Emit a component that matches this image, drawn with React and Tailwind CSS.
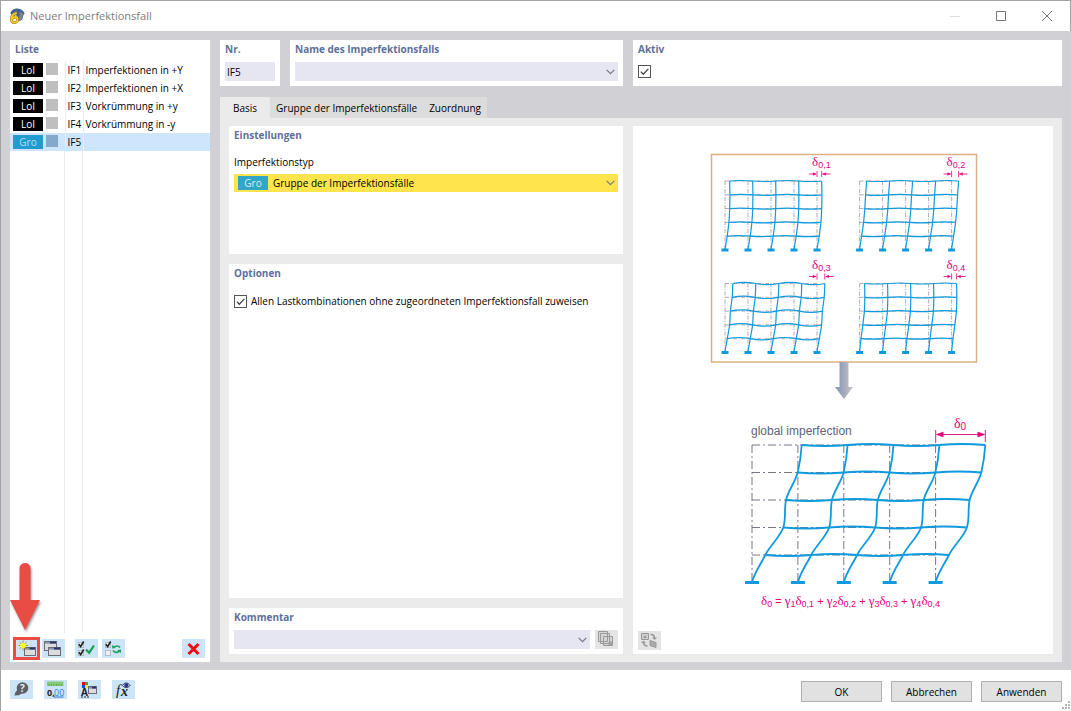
import React, { useState } from "react";

const CASES = [
  { id: "IF1", tag: "LoI", name: "Imperfektionen in +Y" },
  { id: "IF2", tag: "LoI", name: "Imperfektionen in +X" },
  { id: "IF3", tag: "LoI", name: "Vorkrümmung in +y" },
  { id: "IF4", tag: "LoI", name: "Vorkrümmung in -y" },
  { id: "IF5", tag: "Gro", name: "" },
];

const TABS = ["Basis", "Gruppe der Imperfektionsfälle", "Zuordnung"];

const Card = ({ className = "", children }) => (
  <section className={`bg-white px-[5px] pt-px ${className}`}>{children}</section>
);

const Title = ({ children }) => (
  <h2 className="text-[10px] leading-4 font-bold text-[#5f709b]">{children}</h2>
);

const Chevron = () => (
  <svg
    className="pointer-events-none absolute top-1/2 right-[3px] h-[6px] w-[9px] -translate-y-1/2"
    viewBox="0 0 9 6"
    fill="none"
    stroke="#7b7b86"
    strokeWidth="1.3"
  >
    <path d="M.7.9 4.5 4.7 8.3.9" />
  </svg>
);

const Checkbox = ({ id, label }) => {
  const [checked, setChecked] = useState(true);
  return (
    <span className="relative block h-[13px] w-[13px] shrink-0">
      <input
        id={id}
        type="checkbox"
        aria-label={label}
        checked={checked}
        onChange={(e) => setChecked(e.target.checked)}
        className="peer block h-[13px] w-[13px] appearance-none border border-[#555] bg-white"
      />
      <svg
        className="pointer-events-none absolute inset-0 hidden peer-checked:block"
        viewBox="0 0 13 13"
        fill="none"
        stroke="#444"
        strokeWidth="1.3"
      >
        <path d="M2.8 6.6 5.3 9.2 10.4 3.9" />
      </svg>
    </span>
  );
};

const IconButton = ({ label, disabled, children }) => (
  <button
    type="button"
    aria-label={label}
    disabled={disabled}
    className={`flex h-[19px] w-[23px] items-center justify-center ${
      disabled ? "bg-[#e4e4e4]" : "bg-[#cce4f7] hover:bg-[#b5d8f3]"
    }`}
  >
    <svg viewBox="0 0 23 19" className="h-[19px] w-[23px]">
      {children}
    </svg>
  </button>
);

const AppLogo = () => (
  <svg viewBox="0 0 16 16" className="h-4 w-4">
    <path d="M1.500 5.500C1.500 2.500 5 .3 8.500.5c3.500.2 6 2 7.200 5.200l-1.200 1-1.300 5L9 13.500 7 6 3 7z" fill="#47628f" />
    <path d="M11 3.500l3.200 2.300-1.600 5.700-2.600 1z" fill="#7d8694" />
    <path
      d="M7.800 4.800C4.500 5.500 2.300 8 2.300 11.200c0 2.100 1.200 3.400 3 3.400s3.300-1.300 3.300-3.100c0-1.500-.9-2.500-2.400-2.500-1.400 0-2.800.9-3.500 2.400"
      fill="none"
      stroke="#8a742a"
      strokeWidth="2.800"
    />
    <path
      d="M7.800 4.800C4.500 5.500 2.300 8 2.300 11.200c0 2.100 1.200 3.400 3 3.400s3.300-1.300 3.300-3.100c0-1.500-.9-2.500-2.400-2.500-1.400 0-2.800.9-3.500 2.400"
      fill="none"
      stroke="#f6cb25"
      strokeWidth="1.800"
    />
  </svg>
);

// Little window with a dark title bar, used in several toolbar icons
const MiniWindow = ({ x, y, w = 10, h = 8 }) => (
  <g>
    <rect x={x + 0.5} y={y + 0.5} width={w} height={h} fill="#dcdcde" stroke="#6c6c72" />
    <rect x={x + 1} y={y + 1} width={w - 1} height="1.700" fill="#8d93a6" />
    <rect x={x + w / 2} y={y + 0.5} width={w / 2} height="2" fill="#27336f" />
  </g>
);

const MiniCheck = ({ x, y, on = true }) => (
  <g fill="none">
    <rect x={x + 0.5} y={y + 0.5} width="5" height="5" fill="#e9f0f6" stroke="#b5bcc4" />
    {on && <path d={`M${x + 0.800} ${y + 2.2}l1.900 2.300 3-5`} stroke="#222" strokeWidth="1.600" />}
  </g>
);

const NewIcon = () => (
  <>
    <MiniWindow x={9} y={8} w={11} h={8} />
    <path d="M8 1.500v10M3.500 6.500h9.500M4.500 3.200l7 6.600M11.500 3.200l-7 6.600" stroke="#a39c22" strokeWidth="1" />
    <circle cx="8" cy="6.500" r="2.800" fill="#fbf42c" />
  </>
);

const CopyIcon = () => (
  <>
    <MiniWindow x={2} y={2} w={12} h={9} />
    <MiniWindow x={6} y={8} w={12} h={8} />
  </>
);

const CheckAllIcon = () => (
  <>
    <MiniCheck x={3} y={3} />
    <MiniCheck x={3} y={11} />
    <path d="M11 10.500l3.200 3.200 4.800-7.200" fill="none" stroke="#17a04a" strokeWidth="2.200" />
  </>
);

const InvertIcon = () => (
  <>
    <MiniCheck x={3} y={3} />
    <MiniCheck x={3} y={11} on={false} />
    <path d="M18 8.500c-1.500-2-4.500-2-6 0M11 11.500c2 2.500 5 2.500 6.500.5" fill="none" stroke="#22a05a" strokeWidth="1.700" />
    <path d="M10.200 9.500V5.800l3.600 3.200zM19 14V10.500l-4 .8z" fill="#22a05a" />
  </>
);

const HelpIcon = () => (
  <>
    <circle cx="12.500" cy="8" r="5.800" fill="#5f5f63" />
    <path d="M8 9l-2.500 3.300-1.200 3.200 4.500-.3 3-1.700z" fill="#5f5f63" />
    <text x="12.500" y="11.500" textAnchor="middle" fontSize="10" fontWeight="700" fill="#dfeefa">?</text>
  </>
);

const DecimalsIcon = () => (
  <>
    <rect x="3" y="1.500" width="16.500" height="4.500" fill="#86ca79" />
    <path d="M5 6V4M7.500 6V4M10 6V4M12.500 6V4M15 6V4M17.500 6V4" stroke="#4e9c46" strokeWidth=".7" />
    <text x="3" y="15.500" fontSize="9" fontWeight="700" fill="#222">0,</text>
    <text x="10" y="15.500" fontSize="9" fill="#3978d4">00</text>
    <path d="M10 17h9.500" stroke="#3978d4" />
  </>
);

const DisplayIcon = () => (
  <>
    <path d="M4 2h3v3H4z" fill="#f00" />
    <path d="M7 2h3v3H7z" fill="#2eae37" />
    <path d="M4 5h3v3H4z" fill="#2545e0" />
    <path d="M7 5h3v3H7z" fill="#f2e42a" />
    <text x="3" y="15.500" fontSize="10" fontWeight="700" fill="#222">A</text>
    <path d="M3 17h9" stroke="#222" strokeDasharray="2 1" />
    <MiniWindow x={10} y={6} w={8} h={7} />
  </>
);

const FormulaIcon = () => (
  <>
    <text x="4" y="14.500" fontSize="15" fontStyle="italic" fontFamily="Liberation Serif, serif" fill="#222">f</text>
    <text x="9" y="16" fontSize="14" fontStyle="italic" fontWeight="700" fontFamily="Liberation Serif, serif" fill="#222">x</text>
    <path d="M10.500 5.500c2-3.300 5.500-3.300 7.500 0-2 2.800-5.500 2.800-7.500 0z" fill="#e6e8f5" stroke="#232b5c" />
    <circle cx="14.300" cy="5.200" r="2" fill="#27348b" />
  </>
);

// A sheared multi-storey frame; shifts are listed from the roof down to the base
const Frame = ({ x, y, bay, storey, shifts, wave, weight, foot, dash, ghostWeight }) => {
  const bays = [0, 1, 2, 3, 4];
  const base = y + storey * 5;

  const column = (i) => {
    const pts = shifts.map((s, k) => [x + i * bay + s, y + k * storey]);
    let d = `M${pts[0].join(" ")}`;
    for (let k = 0; k < pts.length - 1; k++) {
      const before = pts[k - 1] || [pts[k][0], y];
      const a = pts[k];
      const b = pts[k + 1];
      const after = pts[k + 2] || b;
      d += `C${a[0] + (b[0] - before[0]) / 7} ${a[1] + storey / 3} ${b[0] - (after[0] - a[0]) / 7} ${b[1] - storey / 3} ${b[0]} ${b[1]}`;
    }
    return d;
  };

  const beam = (k) => {
    const left = x + shifts[k];
    const top = y + k * storey;
    return `M${left} ${top}q${bay / 2} ${wave} ${bay} 0t${bay} 0t${bay} 0t${bay} 0`;
  };

  return (
    <g fill="none">
      <g stroke="#77778a" strokeWidth={ghostWeight} strokeDasharray={dash}>
        {bays.map((i) => (
          <path key={`v${i}`} d={`M${x + i * bay} ${y}V${base}`} />
        ))}
        {bays.map((k) => (
          <path key={`h${k}`} d={`M${x} ${y + k * storey}h${bay * 4}`} />
        ))}
      </g>
      <g stroke="#0f9ade" strokeWidth={weight} strokeLinejoin="round">
        {bays.map((i) => (
          <path key={`c${i}`} d={column(i)} />
        ))}
        {bays.map((k) => (
          <path key={`b${k}`} d={beam(k)} />
        ))}
      </g>
      <g fill="#0f9ade">
        {bays.map((i) => (
          <rect key={i} x={x + i * bay - foot / 2} y={base - 1.5} width={foot} height="3" />
        ))}
      </g>
    </g>
  );
};

const Delta = ({ sub, size = 13 }) => (
  <>
    <tspan fontFamily="Liberation Serif, serif" fontSize={size}>δ</tspan>
    <tspan dy="2" fontSize={size - 4}>{sub}</tspan>
  </>
);

const SmallFrame = ({ x, y, sub, shifts, wave }) => {
  const edge = x + 92;
  const tip = edge + shifts[0];
  return (
    <g>
      <Frame
        x={x}
        y={y}
        bay={23}
        storey={13.8}
        shifts={shifts}
        wave={wave}
        weight={1.2}
        foot={7}
        dash="4 1.5 1 1.5"
        ghostWeight={0.6}
      />
      <text x={edge - 5} y={y - 15} fill="#e5007d"><Delta sub={sub} /></text>
      <g stroke="#e5007d" strokeWidth=".8" fill="#e5007d">
        <path d={`M${edge} ${y - 10}v6M${tip} ${y - 10}v6M${edge - 8} ${y - 7}h7M${tip + 1} ${y - 7}h8`} />
        <path d={`M${edge - 1} ${y - 7}l-3-1.300v2.600zM${tip + 1} ${y - 7}l3-1.300v2.600z`} strokeWidth=".4" />
      </g>
    </g>
  );
};

const ImperfectionDiagram = () => (
  <svg
    viewBox="0 0 298 470"
    className="h-[470px] w-[298px]"
    fontFamily="Liberation Sans, Arial, sans-serif"
    role="img"
    aria-label="global imperfection"
  >
    <defs>
      <linearGradient id="arrowFill">
        <stop offset="0" stopColor="#7f92b8" />
        <stop offset="1" stopColor="#c9c4c2" />
      </linearGradient>
    </defs>

    <rect x="17.500" y="9.500" width="265" height="207.500" fill="none" stroke="#dcb182" strokeWidth="1.500" />
    <SmallFrame x={31} y={36} sub="0,1" shifts={[4.7, 4.9, 4.7, 3.9, 2.2, 0]} wave={-1} />
    <SmallFrame x={165.6} y={36} sub="0,2" shifts={[7, 6, 5.2, 4, 2, 0]} wave={1} />
    <SmallFrame x={31} y={138.5} sub="0,3" shifts={[7.8, 7.2, 5.4, 4.6, 2.3, 0]} wave={-2.4} />
    <SmallFrame x={165.6} y={138.5} sub="0,4" shifts={[5, 5.2, 4.8, 3.2, 1.4, 0]} wave={1} />

    <path d="M145.500 217h9v25h4.500l-9 12-9-12h4.500z" fill="url(#arrowFill)" />

    <text x="57" y="290" fontSize="12" fill="#62627a">global imperfection</text>
    <text x="260" y="283" fill="#e5007d"><Delta sub="0" size={14} /></text>
    <g stroke="#e5007d" fill="#e5007d">
      <path d="M241.700 285v13M291.300 285v12M246 289.500h41" strokeWidth=".9" />
      <path d="M242.200 289.500l7-2.500v5zM290.800 289.500l-7-2.500v5z" strokeWidth=".5" />
    </g>
    <Frame
      x={58}
      y={300}
      bay={45.9}
      storey={27.5}
      shifts={[49.7, 45.7, 34, 31.3, 13.3, 0]}
      wave={2}
      weight={1.8}
      foot={14}
      dash="8 3 2 3"
      ghostWeight={1}
    />

    <text x="67" y="460" fontSize="11" fill="#e5007d">
      <Delta sub="0" />
      <tspan dy="-2"> = </tspan>
      {[1, 2, 3, 4].map((n) => (
        <React.Fragment key={n}>
          {n > 1 && <tspan dy="-2"> + </tspan>}
          <tspan fontFamily="Liberation Serif, serif" fontSize="13">γ</tspan>
          <tspan dy="2" fontSize="9">{n}</tspan>
          <tspan dy="-2" fontFamily="Liberation Serif, serif" fontSize="13">δ</tspan>
          <tspan dy="2" fontSize="9">{`0,${n}`}</tspan>
        </React.Fragment>
      ))}
    </text>
  </svg>
);

const CaseList = () => (
  <aside className="flex w-[200px] shrink-0 flex-col bg-white pt-px pb-1">
    <div className="px-[5px] pb-1">
      <Title>Liste</Title>
    </div>
    <table className="w-full table-fixed border-collapse">
      <colgroup>
        <col className="w-[55px]" />
        <col className="w-[18px]" />
        <col />
      </colgroup>
      <tbody>
        {CASES.map((c) => (
          <tr key={c.id} className={c.tag === "Gro" ? "bg-[#cde6fd]" : ""}>
            <td className="h-[18px] border-r border-[#ededed] p-0">
              <div className="flex gap-[3px] pl-[3px]">
                <span
                  className={`h-[14px] w-[30px] text-center leading-[15px] ${
                    c.tag === "Gro" ? "bg-[#229bd0] text-[#b5dcf2]" : "bg-black text-white"
                  }`}
                >
                  {c.tag}
                </span>
                <span className={`h-3 w-3 ${c.tag === "Gro" ? "bg-[#86a9c9]" : "bg-[#bfbfbf]"}`} />
              </div>
            </td>
            <td className="border-r border-[#ededed] p-0 pl-[2px]">{c.id}</td>
            <td className="p-0 pl-[2px] whitespace-nowrap">{c.name}</td>
          </tr>
        ))}
      </tbody>
    </table>
    <div className="flex flex-1">
      <div className="w-[55px] border-r border-[#ededed]" />
      <div className="w-[18px] border-r border-[#ededed]" />
    </div>
    <div className="flex items-center pt-[6px] pr-[5px] pl-[5px]">
      <div className="relative outline-3 -outline-offset-1 outline-[#e94b45]">
        <IconButton label="Neu"><NewIcon /></IconButton>
        {/* Callout arrow pointing at the "new" button */}
        <svg
          viewBox="0 0 36 76"
          className="pointer-events-none absolute bottom-full left-1/2 h-[76px] w-9 -translate-x-1/2 drop-shadow-[1px_2px_1px_rgba(0,0,0,0.4)]"
        >
          <path d="M10.500 5a5.500 5 0 0 1 11 0V37H31L16 67 1 37H10.500z" fill="#e94b45" />
        </svg>
      </div>
      <div className="ml-1"><IconButton label="Kopieren"><CopyIcon /></IconButton></div>
      <div className="ml-[10px]"><IconButton label="Alle auswählen"><CheckAllIcon /></IconButton></div>
      <div className="ml-1"><IconButton label="Auswahl umkehren"><InvertIcon /></IconButton></div>
      <div className="ml-auto">
        <IconButton label="Löschen">
          <path d="M6.500 5l10 10M16.500 5l-10 10" stroke="#f20d0d" strokeWidth="3" />
        </IconButton>
      </div>
    </div>
  </aside>
);

const selectClass = "block h-[19px] w-full appearance-none bg-[#e6e6f2]";

const App = () => {
  const [tab, setTab] = useState("Basis");

  return (
    <div className="flex min-h-screen flex-col border-t border-l border-[#a3a3a3] bg-white font-['Open_Sans','Noto_Sans',sans-serif] text-[10px] leading-4 text-black">
      {/* Title bar */}
      <header className="flex h-[30px] items-center border-r border-[#a3a3a3] pl-2">
        <AppLogo />
        <h1 className="ml-[5px] text-[11px] text-[#7d7d7d]">Neuer Imperfektionsfall</h1>
        <div className="ml-auto flex">
          <button type="button" aria-label="Minimieren" className="flex h-[30px] w-[46px] items-center justify-center">
            <svg viewBox="0 0 10 10" className="h-[10px] w-[10px]"><path d="M0 5.500h10" stroke="#ddd" /></svg>
          </button>
          <button type="button" aria-label="Maximieren" className="flex h-[30px] w-[46px] items-center justify-center">
            <svg viewBox="0 0 10 10" className="h-[10px] w-[10px]"><path d="M.5.5h9v9h-9z" fill="none" stroke="#777" /></svg>
          </button>
          <button type="button" aria-label="Schließen" className="flex h-[30px] w-[46px] items-center justify-center">
            <svg viewBox="0 0 10 10" className="h-[10px] w-[10px]"><path d="M0 0l10 10M10 0L0 10" stroke="#777" /></svg>
          </button>
        </div>
      </header>

      {/* Work area */}
      <main className="flex flex-1 gap-[10px] bg-[#d0d0d5] px-[9px] pt-[9px] pb-2">
        <CaseList />

        <div className="flex min-w-0 flex-1 flex-col">
          <div className="grid grid-cols-[403fr_429fr] gap-[10px]">
            <div className="flex gap-[10px]">
              <Card className="h-[46px] w-[60px]">
                <label htmlFor="nr"><Title>Nr.</Title></label>
                <input id="nr" defaultValue="IF5" className="mt-[5px] block h-[19px] w-[50px] bg-[#e6e6f2] px-[2px]" />
              </Card>
              <Card className="h-[46px] flex-1">
                <label htmlFor="name"><Title>Name des Imperfektionsfalls</Title></label>
                <div className="relative mt-[5px]">
                  <select id="name" className={selectClass}>
                    <option></option>
                  </select>
                  <Chevron />
                </div>
              </Card>
            </div>
            <Card className="h-[46px]">
              <Title>Aktiv</Title>
              <div className="mt-2"><Checkbox id="active" label="Aktiv" /></div>
            </Card>
          </div>

          <div role="tablist" className="mt-[11px] flex items-stretch">
            {TABS.map((t) => (
              <button
                key={t}
                type="button"
                role="tab"
                aria-selected={tab === t}
                onClick={() => setTab(t)}
                className={`h-[21px] ${
                  tab === t ? "bg-[#ebebeb] px-[13px]" : "bg-[#dcdcdc] px-[6px]"
                }`}
              >
                {t}
              </button>
            ))}
          </div>

          <div className="grid flex-1 grid-cols-[394fr_420fr] gap-[10px] bg-[#ebebeb] px-[9px] py-2">
            <div className="flex flex-col gap-[10px]">
              <Card className="h-[128px]">
                <Title>Einstellungen</Title>
                <label htmlFor="type" className="mt-[11px] block">Imperfektionstyp</label>
                <div className="relative mt-1">
                  <select id="type" className="block h-[18px] w-full appearance-none bg-[#ffe44d] pl-[39px]">
                    <option>Gruppe der Imperfektionsfälle</option>
                  </select>
                  <span className="pointer-events-none absolute top-[2px] left-1 h-[14px] w-[30px] bg-[#31a6c9] text-center leading-[15px] text-[#d8eff8]">
                    Gro
                  </span>
                  <Chevron />
                </div>
              </Card>
              <Card className="flex-1">
                <Title>Optionen</Title>
                <div className="mt-3 flex items-center gap-1">
                  <Checkbox id="assign" />
                  <label htmlFor="assign">Allen Lastkombinationen ohne zugeordneten Imperfektionsfall zuweisen</label>
                </div>
              </Card>
              <Card className="h-[46px]">
                <label htmlFor="comment"><Title>Kommentar</Title></label>
                <div className="mt-[5px] flex gap-[5px]">
                  <div className="relative flex-1">
                    <select id="comment" className={selectClass}>
                      <option></option>
                    </select>
                    <Chevron />
                  </div>
                  <IconButton label="Kommentare" disabled>
                    <g fill="#d6d6d6" stroke="#9a9a9a">
                      <path d="M3.500 1.500h9v10h-9zM5.500 3.500h9v10h-9zM8.500 6.500h9v9h-9z" />
                      <path d="M14 12h3v3h-3z" fill="#aaa" />
                    </g>
                  </IconButton>
                </div>
              </Card>
            </div>

            <div className="flex flex-col justify-between bg-white px-[5px] pt-[19px] pb-1">
              <div className="flex justify-center">
                <ImperfectionDiagram />
              </div>
              <IconButton label="Bild wechseln" disabled>
                <g fill="none" stroke="#989898">
                  <path d="M3.500 2.500h7v6h-7z" fill="#d0d0d0" />
                  <path d="M5 7l2-3 2 3z" fill="#999" stroke="none" />
                  <path d="M12.500 3.500c3 0 4 1.500 4 3.500M5.500 11c0 3 1 4 4 4" strokeWidth="1.500" />
                  <path d="M14 6.500h5l-2.500 2.500zM3 12h5L5.500 9.500z" fill="#989898" stroke="none" />
                  <path d="M12 9.500l6 2v5l-6-2z" fill="#aaa" />
                </g>
              </IconButton>
            </div>
          </div>
        </div>
      </main>

      {/* Footer */}
      <footer className="flex h-[41px] items-start justify-between px-[9px] pt-[10px]">
        <div className="flex gap-[11px]">
          <IconButton label="Hilfe"><HelpIcon /></IconButton>
          <IconButton label="Einheiten und Dezimalstellen"><DecimalsIcon /></IconButton>
          <IconButton label="Anzeige"><DisplayIcon /></IconButton>
          <IconButton label="Formel"><FormulaIcon /></IconButton>
        </div>
        <div className="relative flex gap-[9px]">
          {["OK", "Abbrechen", "Anwenden"].map((t) => (
            <button
              key={t}
              type="button"
              className="mt-px h-[21px] w-[81px] border border-[#b0b0b0] bg-[#e1e1e1] hover:bg-[#d5e8f7]"
            >
              {t}
            </button>
          ))}
          <svg viewBox="0 0 8 8" className="absolute top-full left-full -mt-px h-2 w-2" fill="#b5b5b5">
            <path d="M6 0h2v2H6zM3 3h2v2H3zM6 3h2v2H6zM0 6h2v2H0zM3 6h2v2H3zM6 6h2v2H6z" />
          </svg>
        </div>
      </footer>
    </div>
  );
};

export default App;
